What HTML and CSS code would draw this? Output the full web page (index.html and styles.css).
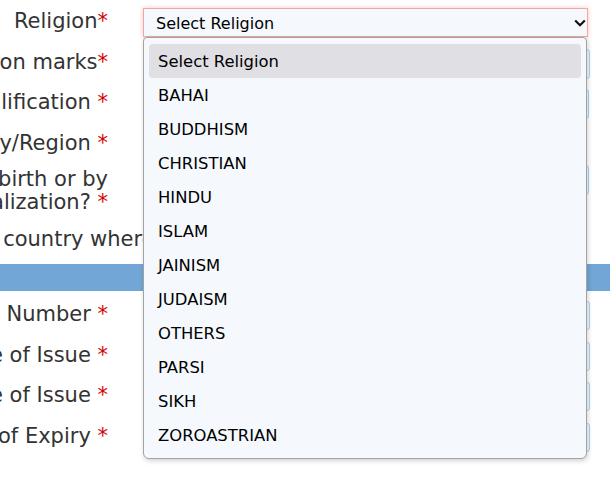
FILE: index.html
```html
<!DOCTYPE html>
<html>
<head>
<meta charset="utf-8">
<link rel="stylesheet" href="styles.css">
</head>
<body>
<div class="form">
  <div class="row r1">
    <div class="label"><span>Religion<span class="req">*</span></span></div>
    <div class="field">
      <div class="select invalid">
        <span>Select Religion</span>
        <svg class="chev" width="12" height="8" viewBox="0 0 12 8"><polyline points="1.2,1.5 6,6.2 10.8,1.5" fill="none" stroke="#111" stroke-width="2.2"/></svg>
      </div>
      <ul class="menu">
        <li class="active">Select Religion</li>
        <li>BAHAI</li>
        <li>BUDDHISM</li>
        <li>CHRISTIAN</li>
        <li>HINDU</li>
        <li>ISLAM</li>
        <li>JAINISM</li>
        <li>JUDAISM</li>
        <li>OTHERS</li>
        <li>PARSI</li>
        <li>SIKH</li>
        <li>ZOROASTRIAN</li>
      </ul>
    </div>
  </div>
  <div class="row r2">
    <div class="label"><span>Visible identification marks<span class="req">*</span></span></div>
    <div class="field"><div class="input"></div></div>
  </div>
  <div class="row r3">
    <div class="label"><span>Educational Qualification <span class="req">*</span></span></div>
    <div class="field"><div class="input narrow2"></div></div>
  </div>
  <div class="row r4">
    <div class="label"><span>Nationality/Region <span class="req">*</span></span></div>
    <div class="field"><div class="input narrow"></div></div>
  </div>
  <div class="row r5 top">
    <div class="label two"><span>Did you acquire Nationality by birth or by<br>naturalization? <span class="req">*</span></span></div>
    <div class="field"><div class="input narrow2"></div></div>
  </div>
  <div class="full">the country where you are applying visa?</div>
  <div class="band"></div>
  <div class="row r8">
    <div class="label"><span>Passport Number <span class="req">*</span></span></div>
    <div class="field"><div class="input"></div></div>
  </div>
  <div class="row r9">
    <div class="label"><span>Place of Issue <span class="req">*</span></span></div>
    <div class="field"><div class="input"></div></div>
  </div>
  <div class="row r10">
    <div class="label"><span>Date of Issue <span class="req">*</span></span></div>
    <div class="field"><div class="input"></div></div>
  </div>
  <div class="row r11">
    <div class="label"><span>Date of Expiry <span class="req">*</span></span></div>
    <div class="field"><div class="input"></div></div>
  </div>
</div>
</body>
</html>
```
FILE: styles.css
```css
html, body {
  margin: 0;
  padding: 0;
  background: #fff;
  overflow: hidden;
  width: 610px;
  height: 480px;
}
body {
  font-family: "DejaVu Sans", Verdana, sans-serif;
  color: #333;
}
.form {
  display: flex;
  flex-direction: column;
  padding-top: 8px;
}
.row {
  display: flex;
  align-items: center;
  gap: 35px;
}
.row.top { align-items: flex-start; }
.label {
  width: 108px;
  flex: none;
  display: flex;
  justify-content: flex-end;
  font-size: 21px;
  line-height: 23px;
  white-space: nowrap;
  margin-top: -3px;
}
.label.two {
  text-align: right;
  margin-top: 3px;
}
.req { color: #d40000; }
.field {
  position: relative;
  width: 447px;
  flex: none;
}
.r2 { margin-top: 12px; }
.r3 { margin-top: 10px; }
.r4 { margin-top: 11px; }
.r5 { margin-top: 5px; }
.r8 { margin-top: 10px; }
.r9 { margin-top: 12px; }
.r10 { margin-top: 11px; }
.r11 { margin-top: 12px; }

.select {
  box-sizing: border-box;
  width: 445px;
  height: 29px;
  display: flex;
  align-items: center;
  justify-content: space-between;
  padding: 0 1px 0 12px;
  background: #f5f9fe;
  border: 1px solid #f2a5a5;
  box-shadow: 0 0 5px rgba(255, 90, 90, 0.35);
  font-size: 16px;
  color: #000;
}
.select span { margin-top: 1px; }
.chev { display: block; margin-top: 1px; }
.input {
  box-sizing: border-box;
  width: 447px;
  height: 30px;
  background: #f5f9fe;
  border: 1px solid #a7d2f6;
  border-radius: 3px;
}
.input.narrow { width: 430px; }
.input.narrow2 { width: 446px; border-radius: 0 3px 3px 0; }
.r8 .input, .r9 .input, .r10 .input, .r11 .input { height: 29px; }
.full {
  margin-top: 14px;
  margin-left: -38px;
  font-size: 21px;
  line-height: 23px;
  white-space: nowrap;
}
.band {
  margin-top: 13px;
  height: 27px;
  background: #72a6d6;
}
.menu {
  position: absolute;
  left: 0;
  top: 29px;
  z-index: 5;
  box-sizing: border-box;
  width: 444px;
  margin: 0;
  padding: 6px 5px 6px;
  list-style: none;
  background: #f5f9fe;
  border: 1px solid #a3a3a3;
  border-radius: 4px 4px 6px 6px;
  box-shadow: 1px 2px 5px rgba(0, 0, 0, 0.18);
}
.menu li {
  height: 34px;
  line-height: 36px;
  padding-left: 9px;
  font-size: 16.4px;
  color: #000;
  border-radius: 4px;
}
.menu li.active { background: #e0dfe4; }
```
